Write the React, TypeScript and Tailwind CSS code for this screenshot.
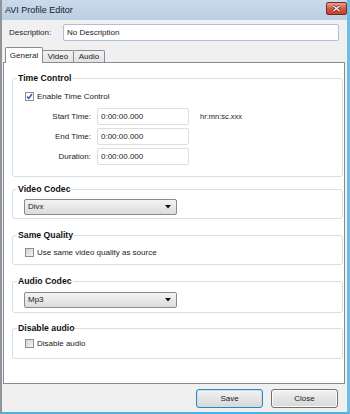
import { clsx } from 'clsx'

const font = "font-['Liberation_Sans',Arial,sans-serif]"

function GroupBox({ title, className, children }: { title: string; className?: string; children?: React.ReactNode }) {
  return (
    <div className={clsx('relative border border-[#d5dfe5] rounded-[3px]', className)}>
      <span className="absolute left-[4px] -top-[6px] px-[1px] bg-white font-bold text-[8.7px] leading-[11px] text-[#111]">
        {title}
      </span>
      {children}
    </div>
  )
}

function CheckBox({ checked, label }: { checked?: boolean; label: string }) {
  return (
    <div className="flex items-center h-[9px]">
      <div
        className={clsx(
          'w-[9px] h-[9px] border border-[#8e8f8f] flex items-center justify-center',
          checked ? 'bg-white' : 'bg-gradient-to-br from-[#d3d3d3] to-[#f4f4f4]'
        )}
      >
        {checked && (
          <svg width="7" height="7" viewBox="0 0 7 7">
            <path d="M1 3.5 L2.8 5.5 L6 1" stroke="#3355aa" strokeWidth="1.4" fill="none" />
          </svg>
        )}
      </div>
      <span className="ml-[3px] text-[8px] leading-[10px] text-[#1a1a1a]">{label}</span>
    </div>
  )
}

function Select({ value }: { value: string }) {
  return (
    <div className="ml-[11px] w-[153px] h-[16px] border border-[#8b8b8b] rounded-[2px] bg-gradient-to-b from-[#f3f3f3] to-[#dcdcdc] flex items-center pl-[3px] pr-[5px]">
      <span className="flex-1 text-[8px] leading-[10px] text-[#1a1a1a]">{value}</span>
      <svg width="6" height="4" viewBox="0 0 6 4">
        <path d="M0 0 L6 0 L3 3.5 Z" fill="#111" />
      </svg>
    </div>
  )
}

function TimeRow({ label, hint }: { label: string; hint?: string }) {
  return (
    <div className="flex items-center">
      <span className="w-[66px] text-right text-[8px] leading-[10px] text-[#1a1a1a]">{label}</span>
      <div className="ml-[6px] w-[92px] h-[17px] border border-[#d9dfe6] rounded-[2px] bg-white flex items-center pl-[3px]">
        <span className="text-[8px] leading-[10px] text-[#1a1a1a]">0:00:00.000</span>
      </div>
      {hint && <span className="ml-[11px] text-[7.5px] leading-[10px] text-[#1a1a1a]">{hint}</span>}
    </div>
  )
}

export default function App() {
  return (
    <div
      className={clsx(
        'w-[350px] h-[414px] flex flex-col bg-[#f0f0f0] border-l-[2px] border-l-[#8f949a] border-r-[3px] border-r-[#6dbde6] border-b-[2px] border-b-[#4fb3e0]',
        font
      )}
    >
      {/* title bar */}
      <div className="h-[20px] shrink-0 flex items-center justify-between bg-gradient-to-b from-[#cbdaec] to-[#bccee4] pl-[3px]">
        <span className="text-[9px] leading-[12px] text-[#1a1a1a]">AVI Profile Editor</span>
        <div className="w-[21px] h-[13px] -mt-[3px] rounded-[2px] border border-[#7a2a20] bg-gradient-to-b from-[#e6a493] via-[#cf5a45] to-[#c0412c] flex items-center justify-center">
          <svg width="9" height="7" viewBox="0 0 9 7">
            <path d="M1.5 1 L7.5 6 M7.5 1 L1.5 6" stroke="#5a1a10" strokeWidth="2.6" />
            <path d="M1.5 1 L7.5 6 M7.5 1 L1.5 6" stroke="#fff" strokeWidth="1.4" />
          </svg>
        </div>
      </div>

      {/* description */}
      <div className="flex items-center pt-[4px] pl-[7px] pr-[8px]">
        <span className="w-[54px] text-[8px] leading-[10px] text-[#1a1a1a]">Description:</span>
        <div className="flex-1 h-[17px] border border-[#a9c0d8] rounded-[2px] bg-white flex items-center pl-[3px]">
          <span className="text-[8px] leading-[10px] text-[#1a1a1a]">No Description</span>
        </div>
      </div>

      {/* tabs */}
      <div className="mt-[6px] ml-[1px] pl-[2px] h-[16px] -mb-[1px] flex items-end relative z-10">
        <div className="w-[38px] h-[16px] bg-white border border-b-0 border-[#898c95] rounded-t-[2px] flex items-center justify-center">
          <span className="text-[8px] leading-[10px] text-[#1a1a1a]">General</span>
        </div>
        <div className="w-[31px] h-[12px] mb-[1px] bg-gradient-to-b from-[#f2f2f2] to-[#e3e3e3] border border-b-0 border-l-0 border-[#898c95] rounded-tr-[2px] flex items-center justify-center">
          <span className="text-[8px] leading-[10px] text-[#1a1a1a]">Video</span>
        </div>
        <div className="w-[31px] h-[12px] mb-[1px] bg-gradient-to-b from-[#f2f2f2] to-[#e3e3e3] border border-b-0 border-l-0 border-[#898c95] rounded-tr-[2px] flex items-center justify-center">
          <span className="text-[8px] leading-[10px] text-[#1a1a1a]">Audio</span>
        </div>
      </div>

      {/* tab panel */}
      <div className="ml-[1px] mr-[2px] h-[322px] shrink-0 border border-[#898c95] bg-white pt-[15px] pl-[8px] pr-[1px]">
        <GroupBox title="Time Control" className="pt-[13px] pl-[12px] pb-[11px]">
          <CheckBox checked label="Enable Time Control" />
          <div className="mt-[7px] flex flex-col gap-[3px]">
            <TimeRow label="Start Time:" hint="hr:mn:sc.xxx" />
            <TimeRow label="End Time:" />
            <TimeRow label="Duration:" />
          </div>
        </GroupBox>

        <GroupBox title="Video Codec" className="mt-[12px] pt-[9px] pb-[3px]">
          <Select value="Divx" />
        </GroupBox>

        <GroupBox title="Same Quality" className="mt-[16px] pt-[12px] pb-[7px] pl-[12px]">
          <CheckBox label="Use same video quality as source" />
        </GroupBox>

        <GroupBox title="Audio Codec" className="mt-[16px] pt-[10px] pb-[4px]">
          <Select value="Mp3" />
        </GroupBox>

        <GroupBox title="Disable audio" className="mt-[15px] pt-[10px] pb-[10px] pl-[12px]">
          <CheckBox label="Disable audio" />
        </GroupBox>
      </div>

      {/* buttons */}
      <div className="flex-1 flex justify-end items-start pt-[5px] pr-[9px] gap-[8px]">
        <button className="w-[67px] h-[19px] rounded-[3px] border border-[#3c7fb1] bg-gradient-to-b from-[#f2f2f2] to-[#d8d8d8] shadow-[inset_0_0_0_1px_#bfe3f8] text-[8px] leading-[10px] text-[#1a1a1a]">
          Save
        </button>
        <button className="w-[67px] h-[19px] rounded-[3px] border border-[#707070] bg-gradient-to-b from-[#f2f2f2] to-[#d8d8d8] shadow-[inset_0_0_0_1px_#fbfbfb] text-[8px] leading-[10px] text-[#1a1a1a]">
          Close
        </button>
      </div>
    </div>
  )
}
